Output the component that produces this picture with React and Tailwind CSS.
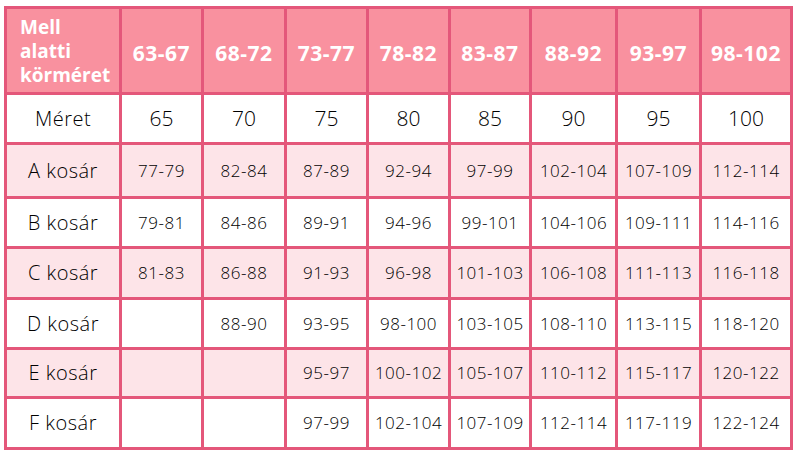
import React from 'react';

const sizes = ['63-67', '68-72', '73-77', '78-82', '83-87', '88-92', '93-97', '98-102'];
const widths = [115, 82, 83, 82, 82, 81, 86, 84, 91];

const rows = [
    { label: 'Méret', h: 'h-[50px]', pink: false, big: true, cells: ['65', '70', '75', '80', '85', '90', '95', '100'] },
    { label: 'A kosár', h: 'h-[54px]', pink: true, cells: ['77-79', '82-84', '87-89', '92-94', '97-99', '102-104', '107-109', '112-114'] },
    { label: 'B kosár', h: 'h-[50px]', pink: false, cells: ['79-81', '84-86', '89-91', '94-96', '99-101', '104-106', '109-111', '114-116'] },
    { label: 'C kosár', h: 'h-[51px]', pink: true, cells: ['81-83', '86-88', '91-93', '96-98', '101-103', '106-108', '111-113', '116-118'] },
    { label: 'D kosár', h: 'h-[50px]', pink: false, cells: ['', '88-90', '93-95', '98-100', '103-105', '108-110', '113-115', '118-120'] },
    { label: 'E kosár', h: 'h-[49px]', pink: true, cells: ['', '', '95-97', '100-102', '105-107', '110-112', '115-117', '120-122'] },
    { label: 'F kosár', h: 'h-[51px]', pink: false, cells: ['', '', '97-99', '102-104', '107-109', '112-114', '117-119', '122-124'] },
];

export default function App() {
    return (
        <div className="w-[799px] h-[455px] bg-white pt-[6px] pl-[4px] font-['Open_Sans','Liberation_Sans',sans-serif]">
            <table className="border-collapse table-fixed w-[788px]">
                <colgroup>
                    {widths.map((w, i) => (
                        <col key={i} style={{ width: w }} />
                    ))}
                </colgroup>
                <thead>
                    <tr className="h-[86px] bg-[#f9919f] text-white">
                        <th className="border-[3px] border-[#e4577a] text-left align-top pl-[13px] pt-[6px] text-[19px] font-bold leading-[24px]">
                            Mell
                            <br />
                            alatti
                            <br />
                            körméret
                        </th>
                        {sizes.map((s) => (
                            <th key={s} className="border-[3px] border-[#e4577a] text-center text-[21px] font-bold pt-[6px] tracking-[0.5px]">
                                {s}
                            </th>
                        ))}
                    </tr>
                </thead>
                <tbody>
                    {rows.map((r) => (
                        <tr key={r.label} className={`${r.h} ${r.pink ? 'bg-[#fde4e8]' : 'bg-white'} text-black`}>
                            <td className="border-[3px] border-[#e4577a] text-center text-[20px] font-light tracking-[0.5px]">{r.label}</td>
                            {r.cells.map((c, i) => (
                                <td
                                    key={i}
                                    className={`border-[3px] border-[#e4577a] text-center font-light ${r.big ? 'text-[21px]' : 'text-[17px] tracking-[0.5px]'}`}
                                >
                                    {c}
                                </td>
                            ))}
                        </tr>
                    ))}
                </tbody>
            </table>
        </div>
    );
}
